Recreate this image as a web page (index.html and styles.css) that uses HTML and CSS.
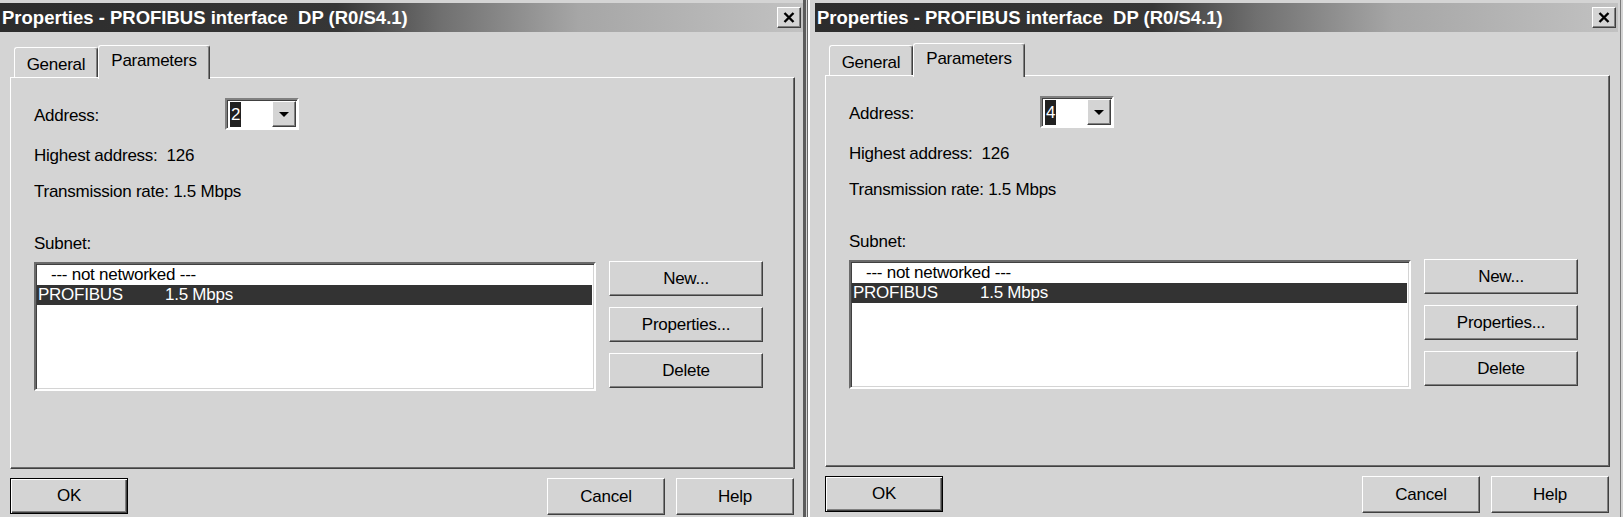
FILE: index.html
```html
<!DOCTYPE html>
<html lang="en">

<head>
    <title>Properties - PROFIBUS interface DP</title>
    <link rel="stylesheet" href="styles.css">
</head>

<body>
    <div class="screen">

        <!-- first dialog: address 2 -->
        <div class="dialog">
            <div class="titlebar">
                <span class="title">Properties - PROFIBUS interface&nbsp; DP (R0/S4.1)</span>
                <div class="close-btn">
                    <svg width="12" height="11" viewBox="0 0 12 11">
                        <path d="M1.5 1 L10.5 10 M10.5 1 L1.5 10" stroke="#000" stroke-width="2.4" fill="none" />
                    </svg>
                </div>
            </div>

            <div class="tabs">
                <div class="tab">General</div>
                <div class="tab active">Parameters</div>
            </div>

            <div class="panel">
                <div class="address-row">
                    <span class="label">Address:</span>
                    <div class="combo">
                        <div class="combo-field"><span class="combo-sel">2</span></div>
                        <div class="combo-btn"><span class="arrow"></span></div>
                    </div>
                </div>
                <div class="info first">Highest address:&nbsp; 126</div>
                <div class="info">Transmission rate: 1.5 Mbps</div>
                <div class="info subnet-label">Subnet:</div>

                <div class="subnet">
                    <div class="listbox">
                        <div class="list-row plain">--- not networked ---</div>
                        <div class="list-row selected"><span class="net-name">PROFIBUS</span>1.5 Mbps</div>
                    </div>
                    <div class="side-buttons">
                        <div class="btn side">New...</div>
                        <div class="btn side">Properties...</div>
                        <div class="btn side">Delete</div>
                    </div>
                </div>
            </div>

            <div class="footer">
                <div class="btn foot default">OK</div>
                <div class="btn foot push">Cancel</div>
                <div class="btn foot">Help</div>
            </div>
        </div>

        <div class="divider"></div>

        <!-- second dialog: address 4 -->
        <div class="dialog alt">
            <div class="titlebar">
                <span class="title">Properties - PROFIBUS interface&nbsp; DP (R0/S4.1)</span>
                <div class="close-btn">
                    <svg width="12" height="11" viewBox="0 0 12 11">
                        <path d="M1.5 1 L10.5 10 M10.5 1 L1.5 10" stroke="#000" stroke-width="2.4" fill="none" />
                    </svg>
                </div>
            </div>

            <div class="tabs">
                <div class="tab">General</div>
                <div class="tab active">Parameters</div>
            </div>

            <div class="panel">
                <div class="address-row">
                    <span class="label">Address:</span>
                    <div class="combo">
                        <div class="combo-field"><span class="combo-sel">4</span></div>
                        <div class="combo-btn"><span class="arrow"></span></div>
                    </div>
                </div>
                <div class="info first">Highest address:&nbsp; 126</div>
                <div class="info">Transmission rate: 1.5 Mbps</div>
                <div class="info subnet-label">Subnet:</div>

                <div class="subnet">
                    <div class="listbox">
                        <div class="list-row plain">--- not networked ---</div>
                        <div class="list-row selected"><span class="net-name">PROFIBUS</span>1.5 Mbps</div>
                    </div>
                    <div class="side-buttons">
                        <div class="btn side">New...</div>
                        <div class="btn side">Properties...</div>
                        <div class="btn side">Delete</div>
                    </div>
                </div>
            </div>

            <div class="footer">
                <div class="btn foot default">OK</div>
                <div class="btn foot push">Cancel</div>
                <div class="btn foot">Help</div>
            </div>
        </div>

    </div>
</body>
</html>
```

FILE: styles.css
```css
body,
html {
    margin: 0;
    padding: 0;
    width: 100%;
    height: 100%;
    overflow: hidden;
    background-color: #d4d4d4;
    font-family: "Liberation Sans", Arial, sans-serif;
    font-size: 17px;
    letter-spacing: -0.25px;
    color: #000;
}

.screen {
    display: flex;
    height: 517px;
}

.dialog {
    width: 803px;
    padding-top: 3px;
    border-right: 3px solid #5c5c5c;
    flex-shrink: 0;
}

.dialog.alt {
    border-right: 1px solid #7a7a7a;
    padding-right: 2px;
}

.divider {
    width: 9px;
    flex-shrink: 0;
    background: linear-gradient(90deg, #d4d4d4 0 1px, #666 1px 2px, #fff 2px 4px, #d4d4d4 4px);
}

/* title bar */
.titlebar {
    height: 29px;
    display: flex;
    align-items: center;
    justify-content: space-between;
    background: linear-gradient(90deg, #2c2c2c 0%, #363636 42%, #707070 55%, #a6a6a6 72%, #c2c2c2 100%);
}

.title {
    padding-left: 2px;
    color: white;
    font-weight: bold;
    font-size: 18.5px;
    letter-spacing: 0;
    white-space: nowrap;
}

.close-btn {
    width: 22px;
    height: 19px;
    margin-right: 2px;
    background-color: #d4d4d4;
    border: 1px solid;
    border-color: #fff #404040 #404040 #fff;
    box-shadow: inset -1px -1px #808080;
    display: flex;
    align-items: center;
    justify-content: center;
}

/* tabs */
.tabs {
    display: flex;
    align-items: flex-end;
    height: 32px;
    margin-top: 13px;
    padding-left: 14px;
}

.alt .tabs {
    margin-top: 11px;
}

.tab {
    box-sizing: border-box;
    width: 84px;
    height: 30px;
    padding-top: 7px;
    text-align: center;
    background-color: #d4d4d4;
    border-left: 1px solid #fff;
    border-top: 1px solid #fff;
    border-right: 1px solid #404040;
    box-shadow: inset -1px 0 #808080;
    border-radius: 3px 3px 0 0;
}

.tab.active {
    width: 112px;
    height: 34px;
    margin-bottom: -2px;
    padding-top: 5px;
    position: relative;
    z-index: 1;
}

/* panel */
.panel {
    box-sizing: border-box;
    width: 785px;
    height: 392px;
    margin-left: 10px;
    border-left: 1px solid #fff;
    border-top: 1px solid #fff;
    border-right: 1px solid #404040;
    border-bottom: 1px solid #404040;
    box-shadow: inset -1px -1px #6c6c6c;
    padding-left: 23px;
}

.address-row {
    display: flex;
    align-items: center;
    height: 32px;
    margin-top: 20px;
}

.label {
    width: 191px;
    padding-top: 3px;
}

.combo {
    box-sizing: border-box;
    width: 74px;
    height: 32px;
    display: flex;
    align-items: stretch;
    border: 2px solid;
    border-color: #808080 #fff #fff #808080;
    box-shadow: inset 1px 1px #404040;
    background-color: #fff;
    padding: 1px 1px 1px 1px;
}

.combo-field {
    flex: 1;
    padding: 1px 0 0 2px;
}

.combo-sel {
    display: inline-block;
    height: 25px;
    line-height: 25px;
    padding: 0 1px;
    background-color: #202020;
    color: #fff;
}

.combo-btn {
    box-sizing: border-box;
    width: 24px;
    background-color: #d4d4d4;
    border: 1px solid;
    border-color: #fff #404040 #404040 #fff;
    box-shadow: inset -1px -1px #808080;
    display: flex;
    align-items: center;
    justify-content: center;
}

.arrow {
    width: 0;
    height: 0;
    margin-top: 1px;
    border-left: 5px solid transparent;
    border-right: 5px solid transparent;
    border-top: 5px solid #000;
}

.info {
    height: 20px;
    line-height: 20px;
    margin-top: 16px;
}

.info.first {
    margin-top: 16px;
}

.subnet-label {
    margin-top: 32px;
}

/* subnet list and buttons */
.subnet {
    display: flex;
    margin-top: 7px;
}

.listbox {
    box-sizing: border-box;
    width: 562px;
    height: 129px;
    margin-top: 1px;
    background-color: #fff;
    border: 2px solid;
    border-color: #6a6a6a #fff #fff #6a6a6a;
    box-shadow: inset 1px 1px #404040, inset -1px -1px #d4d4d4;
    padding: 0 2px 0 1px;
}

.list-row {
    height: 21px;
    line-height: 21px;
    white-space: nowrap;
}

.list-row.plain {
    padding-left: 14px;
}

.list-row.selected {
    background-color: #333;
    color: #fff;
    padding-left: 1px;
    height: 20px;
    line-height: 20px;
}

.net-name {
    display: inline-block;
    width: 127px;
}

.side-buttons {
    display: flex;
    flex-direction: column;
    gap: 11px;
    margin-left: 13px;
}

.btn {
    box-sizing: border-box;
    display: flex;
    align-items: center;
    justify-content: center;
    background-color: #d4d4d4;
    border: 1px solid;
    border-color: #fff #404040 #404040 #fff;
    box-shadow: inset -1px -1px #808080;
}

.btn.side {
    width: 154px;
    height: 35px;
}

/* footer buttons */
.footer {
    display: flex;
    margin-top: 9px;
    padding: 0 9px 0 10px;
}

.btn.foot {
    width: 118px;
    height: 37px;
}

.btn.default {
    height: 36px;
    border: 1px solid #000;
    box-shadow: inset 1px 1px #fff, inset -1px -1px #404040, inset -2px -2px #808080;
}

.btn.push {
    margin-left: auto;
    margin-right: 11px;
}
```
